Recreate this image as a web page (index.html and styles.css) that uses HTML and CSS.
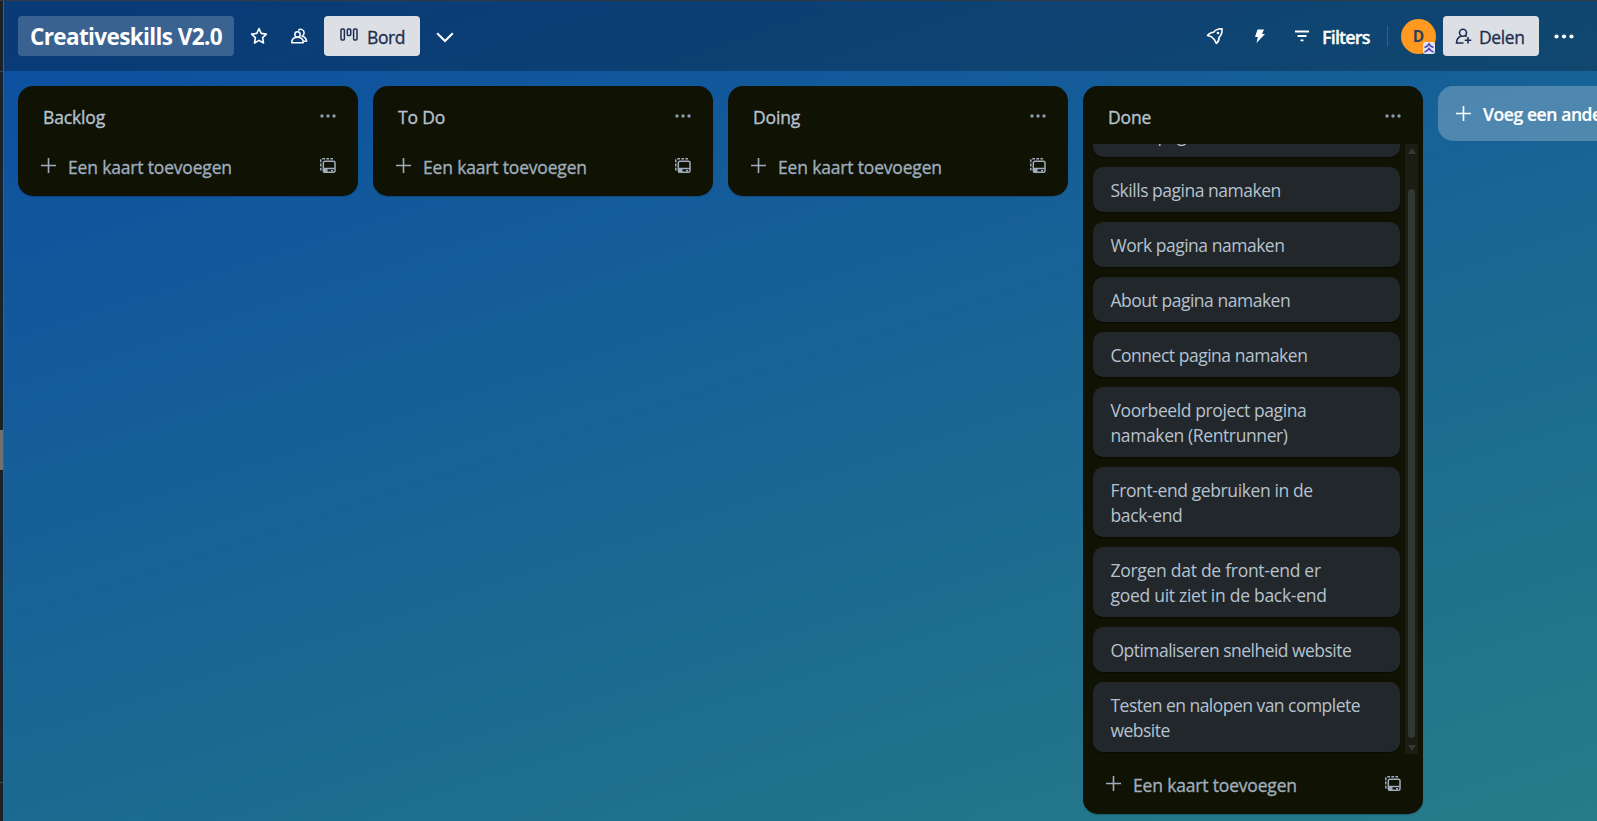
FILE: index.html
```html
<!DOCTYPE html>
<html lang="nl">
<head>
<meta charset="utf-8">
<title>Creativeskills V2.0</title>
<link rel="stylesheet" href="styles.css">
</head>
<body>
<svg class="defs" width="0" height="0">
  <symbol id="plus" viewBox="0 0 15 15"><path d="M7.500 0v15M0 7.500h15" stroke="currentColor" stroke-width="1.600" fill="none"/></symbol>
  <symbol id="dots" viewBox="0 0 16 4"><circle cx="2" cy="2" r="1.700"/><circle cx="8" cy="2" r="1.700"/><circle cx="14" cy="2" r="1.700"/></symbol>
  <symbol id="template" viewBox="0 0 16 16"><g fill="none" stroke="currentColor" stroke-width="1.500"><rect x="3.300" y="3.300" width="11.700" height="11" rx="1.500"/><path d="M3.300 10.500h11.500"/><path d="M0.800 12.500V2.200Q.8.8 2.200.8H13" stroke-dasharray="2.800 1.300"/></g><path d="M3.500 11h4v3h-4zM11 12h2v1.500h-2z" fill="currentColor"/></symbol>
</svg>
<div class="app">
  <aside class="rail"><div class="rail-top"></div><div class="rail-mid"></div><div class="rail-handle"></div><div class="rail-low"></div></aside>
  <main class="board">
    <header class="bar">
      <h1 class="name"><span>Creativeskills V2.0</span></h1>
      <svg class="star" width="18" height="18" viewBox="0 0 18 18"><path d="M9 1.600l2.200 4.800 5.200.7-3.800 3.600.9 5.300L9 13.400 4.500 16l.9-5.300L1.600 7.100l5.200-.7z" fill="none" stroke="#fff" stroke-width="1.600" stroke-linejoin="round"/></svg>
      <svg class="people" width="18" height="18" viewBox="0 0 18 18"><g fill="none" stroke="#fff" stroke-width="1.500"><circle cx="7.500" cy="6.500" r="2.700"/><path d="M1.700 14.800c0-3.800 2-5.500 5.800-5.500s5.800 1.700 5.800 5.500z" stroke-linejoin="round"/><path d="M8.300 2.500c2-2.400 6-.8 5.800 2.200 0 1.500-.7 2.500-1.800 3.300 2.800 1 4 2.800 4.300 5l-3 .3"/></g></svg>
      <button class="btn view"><svg width="18" height="14" viewBox="0 0 18 14"><g fill="none" stroke="currentColor" stroke-width="1.500"><rect x="1" y="1" width="3.400" height="11" rx="1"/><rect x="7.300" y="1" width="3.400" height="6.500" rx="1"/><rect x="13.600" y="1" width="3.400" height="11" rx="1"/></g></svg><span>Bord</span></button>
      <svg class="chev" width="18" height="11" viewBox="0 0 18 11"><path d="M1.200 1.200L9 9l7.800-7.800" fill="none" stroke="#fff" stroke-width="2"/></svg>
      <div class="tools">
        <svg class="rocket" width="18" height="18" viewBox="0 0 18 18"><g fill="none" stroke="#fff" stroke-width="1.600" stroke-linejoin="round"><path d="M16 1.700c-3.800-.2-6.500 1-8.500 3.500C5 5.200 3 6.500 1.500 8.500l4 1.300 3 3 1.800 3.700c1.800-1.500 2.900-3.500 2.700-6 2.400-2.200 3.400-5 3-8.800z"/></g><circle cx="12" cy="6" r="1.300" fill="#fff"/></svg>
        <svg class="bolt" width="12" height="15" viewBox="0 0 12 15"><path d="M3.500.5H10L8 5h3L2.500 14l1.300-6H1z" fill="#fff"/></svg>
        <svg class="filter" width="14" height="12" viewBox="0 0 14 12"><path d="M0 1.500h14M2.500 6h9M5.500 10.300h3" stroke="#fff" stroke-width="1.800"/></svg>
        <span class="filters">Filters</span>
        <i class="sep"></i>
        <div class="avatar"><span>D</span><svg class="rank" width="12" height="12" viewBox="0 0 12 12"><rect width="12" height="12" rx="2" fill="#e4e2f5"/><path d="M1.500 5.500Q4.500 4.500 6 2q1.500 2.500 4.500 3.500M1.500 10Q4.500 9 6 6.500q1.500 2.500 4.500 3.500" fill="none" stroke="#4a43b5" stroke-width="1.500"/></svg></div>
        <button class="btn share"><svg width="17" height="17" viewBox="0 0 17 17"><g fill="none" stroke="currentColor" stroke-width="1.600"><circle cx="8" cy="4.700" r="3.500"/><path d="M8.500 15H1.500c0-4 1.500-5.800 4.500-6.800M10.300 7.500l1.400 1"/><path d="M13 9v6.500M9.800 12.200h6.500"/></g></svg><span>Delen</span></button>
        <svg class="more" width="20" height="5" viewBox="0 0 20 5"><circle cx="2.500" cy="2.500" r="2.100"/><circle cx="10" cy="2.500" r="2.100"/><circle cx="17.500" cy="2.500" r="2.100"/></svg>
      </div>
    </header>
    <div class="lists">
      <section class="list">
        <div class="head"><h2>Backlog</h2><svg class="dots"><use href="#dots"/></svg></div>
        <div class="add"><svg class="plus"><use href="#plus"/></svg><span>Een kaart toevoegen</span><svg class="template"><use href="#template"/></svg></div>
      </section>
      <section class="list">
        <div class="head"><h2>To Do</h2><svg class="dots"><use href="#dots"/></svg></div>
        <div class="add"><svg class="plus"><use href="#plus"/></svg><span>Een kaart toevoegen</span><svg class="template"><use href="#template"/></svg></div>
      </section>
      <section class="list">
        <div class="head"><h2>Doing</h2><svg class="dots"><use href="#dots"/></svg></div>
        <div class="add"><svg class="plus"><use href="#plus"/></svg><span>Een kaart toevoegen</span><svg class="template"><use href="#template"/></svg></div>
      </section>
      <section class="list done">
        <div class="head"><h2>Done</h2><svg class="dots"><use href="#dots"/></svg></div>
        <div class="scroll">
          <div class="cards">
            <div class="card">Index pagina namaken</div>
            <div class="card">Skills pagina namaken</div>
            <div class="card">Work pagina namaken</div>
            <div class="card">About pagina namaken</div>
            <div class="card">Connect pagina namaken</div>
            <div class="card mid">Voorbeeld project pagina<br>namaken (Rentrunner)</div>
            <div class="card mid">Front-end gebruiken in de<br>back-end</div>
            <div class="card wide">Zorgen dat de front-end er<br>goed uit ziet in de back-end</div>
            <div class="card tight">Optimaliseren snelheid website</div>
            <div class="card tight">Testen en nalopen van complete<br>website</div>
          </div>
          <div class="track"><i class="up"></i><i class="thumb"></i><i class="down"></i></div>
        </div>
        <div class="add"><svg class="plus"><use href="#plus"/></svg><span>Een kaart toevoegen</span><svg class="template"><use href="#template"/></svg></div>
      </section>
      <div class="new"><svg class="plus"><use href="#plus"/></svg><span>Voeg een andere lijst toe</span></div>
    </div>
  </main>
</div>
</body>
</html>
```
FILE: styles.css
```css
* { box-sizing: border-box; }
body { margin: 0; overflow: hidden; font-family: "Open Sans", "Noto Sans", sans-serif; font-size: 17px; color: #b6c2cf; }
h1, h2 { margin: 0; }
svg { display: block; flex: none; }
.defs { position: absolute; }
.app { display: flex; width: 1597px; height: 821px; overflow: hidden; border-top: 1px solid #2f3a44; }
.rail { width: 4px; flex: none; display: flex; flex-direction: column; background: #1a2128; border-right: 1px solid #2e6497; }
.rail-top { height: 71px; border-bottom: 1px solid #3a444e; }
.rail-mid { height: 358px; }
.rail-handle { height: 40px; background: #6e7072; }
.rail-low { height: 313px; border-bottom: 1px solid #3a444e; }
.board { flex: 1; min-width: 0; background: linear-gradient(162deg, #0c4fa0 0%, #0d50a0 5%, #176296 45%, #22758a 85%, #267d88 100%); }
.bar { height: 70px; padding: 15px 23px 0 14px; display: flex; background: rgba(0, 0, 0, .26); }
.name { width: 216px; height: 40px; padding-left: 12px; border-radius: 4px; background: rgba(255, 255, 255, .2); color: #fff; font-size: 22.5px; font-weight: 700; line-height: 42px; letter-spacing: -.62px; white-space: nowrap; }
.star { margin: 11px 0 0 16px; }
.people { margin: 12px 0 0 22px; }
.btn { height: 40px; border: 0; border-radius: 4px; background: #dcdfe4; color: #1c2d50; font: 500 17.5px/40px "Open Sans", sans-serif; padding: 0; display: flex; -webkit-text-stroke: .3px; }
.view { width: 96px; margin-left: 16px; padding-left: 16px; gap: 9px; letter-spacing: -.4px; }
.view svg { margin-top: 12px; }
.view span, .share span { line-height: 42px; }
.chev { margin: 16px 0 0 16px; }
.tools { margin-left: auto; display: flex; }
.rocket { margin-top: 11px; }
.bolt { margin: 13px 0 0 30px; }
.filter { margin: 14px 0 0 29px; }
.filters { margin-left: 13px; width: 49px; color: #fff; font-weight: 600; font-size: 18px; line-height: 43px; letter-spacing: -.85px; -webkit-text-stroke: .3px; }
.sep { width: 1px; height: 20px; margin: 10px 0 0 16px; background: #365f86; }
.avatar { position: relative; width: 35px; height: 35px; margin: 3px 0 0 13px; border-radius: 50%; background: #ff991f; color: #2c3e5d; text-align: center; font-size: 15.5px; font-weight: 700; line-height: 35px; }
.rank { position: absolute; right: 1px; bottom: 0; }
.share { width: 96px; margin-left: 7px; padding-left: 12px; gap: 7px; letter-spacing: -.4px; }
.share svg { margin-top: 12px; }
.more { margin: 18px 0 0 15px; fill: #fff; }
.lists { display: flex; align-items: flex-start; gap: 15px; padding: 15px 0 0 14px; }
.list { width: 340px; height: 110px; flex: none; display: flex; flex-direction: column; border-radius: 15px; background: #101204; box-shadow: 0 1px 1px rgba(9, 30, 66, .3); }
.done { height: 728px; }
.head { height: 58px; flex: none; padding: 0 22px 0 25px; display: flex; justify-content: space-between; }
.head h2 { font-size: 17.5px; font-weight: 500; line-height: 24px; margin-top: 19px; height: 24px; letter-spacing: -.15px; -webkit-text-stroke: .35px; }
.dots { width: 16px; height: 4px; margin-top: 28px; fill: #8c9bab; }
.add { display: flex; height: 52px; padding: 14px 22px 0 22.5px; color: #9fadbc; }
.add span { margin: -3px auto 0 12.5px; height: 24px; font-size: 17.5px; font-weight: 500; line-height: 24px; letter-spacing: -.17px; -webkit-text-stroke: .35px; }
.plus { width: 15px; height: 15px; }
.template { width: 16px; height: 16px; }
.scroll { height: 610px; flex: none; overflow: hidden; display: flex; justify-content: space-between; padding: 0 5px 0 10px; }
.cards { width: 307px; height: 610px; display: flex; flex-direction: column; justify-content: flex-end; gap: 10px; padding-bottom: 2px; }
.card { flex: none; padding: 11px 17.5px 9px; border-radius: 10px; background: #22272b; line-height: 25px; font-size: 17.5px; letter-spacing: -.48px; white-space: nowrap; box-shadow: 0 1px 1px rgba(3, 4, 4, .5); }
.mid { letter-spacing: -.39px; }
.wide { letter-spacing: -.28px; }
.tight { letter-spacing: -.53px; }
.track { width: 13px; height: 610px; background: #1b1d12; display: flex; flex-direction: column; align-items: center; }
.up { border: 4px solid transparent; border-top: 0; border-bottom: 6px solid #30383a; margin-top: 4px; }
.thumb { width: 7px; height: 549px; margin-top: 35px; border-radius: 4px; background: #303934; }
.down { border: 4px solid transparent; border-bottom: 0; border-top: 6px solid #30383a; margin-top: 7px; }
.done .add { padding-top: 22px; }
.new { width: 340px; height: 55px; flex: none; display: flex; padding: 20px 0 0 17.5px; gap: 12.5px; border-radius: 15px; background: rgba(255, 255, 255, .24); color: #fff; }
.new span { margin-top: -4px; font-size: 17.5px; font-weight: 600; line-height: 24px; letter-spacing: -.4px; white-space: nowrap; -webkit-text-stroke: .2px; }
```
